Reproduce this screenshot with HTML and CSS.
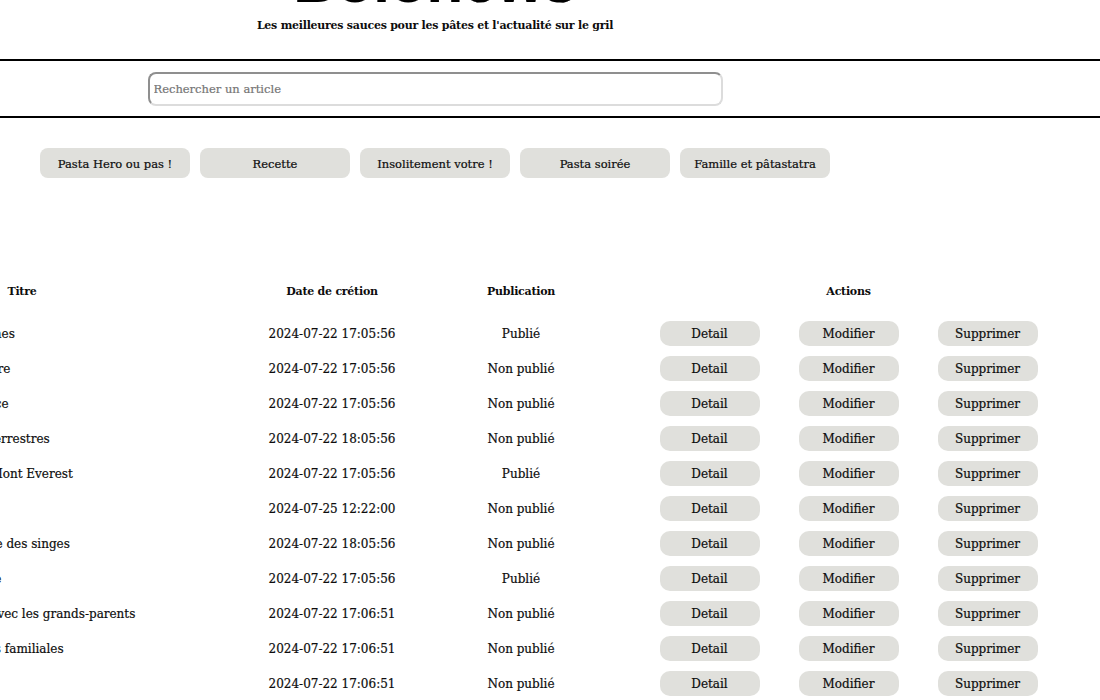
FILE: index.html
```html
<!DOCTYPE html>
<html lang="fr">
<head>
<meta charset="utf-8">
<title>Bolonews – Administration</title>
<link rel="stylesheet" href="styles.css">
</head>
<body>
<header class="masthead">
  <h1 class="brand">Bolonews</h1>
  <p class="tagline">Les meilleures sauces pour les pâtes et l'actualité sur le gril</p>
</header>
<div class="searchbar">
  <div class="search-inner">
    <input class="search" type="text" placeholder="Rechercher un article">
  </div>
</div>
<nav class="cats">
  <a class="cat">Pasta Hero ou pas !</a>
  <a class="cat">Recette</a>
  <a class="cat">Insolitement votre !</a>
  <a class="cat">Pasta soirée</a>
  <a class="cat">Famille et pâtastatra</a>
</nav>
<section class="table">
  <div class="row head">
    <div class="c-title">Titre</div>
    <div class="c-date">Date de crétion</div>
    <div class="c-pub">Publication</div>
    <div class="c-act">Actions</div>
  </div>
  <div class="row">
    <div class="c-title">Les 10 meilleures pâtes italiennes</div>
    <div class="c-date">2024-07-22 17:05:56</div>
    <div class="c-pub">Publié</div>
    <div class="c-act"><a class="btn">Detail</a><a class="btn">Modifier</a><a class="btn">Supprimer</a></div>
  </div>
  <div class="row">
    <div class="c-title">Pennes carbonara de grand-mère</div>
    <div class="c-date">2024-07-22 17:05:56</div>
    <div class="c-pub">Non publié</div>
    <div class="c-act"><a class="btn">Detail</a><a class="btn">Modifier</a><a class="btn">Supprimer</a></div>
  </div>
  <div class="row">
    <div class="c-title">Des lasagnes et leur petite sauce</div>
    <div class="c-date">2024-07-22 17:05:56</div>
    <div class="c-pub">Non publié</div>
    <div class="c-act"><a class="btn">Detail</a><a class="btn">Modifier</a><a class="btn">Supprimer</a></div>
  </div>
  <div class="row">
    <div class="c-title">Des spaghettis pour des extraterrestres</div>
    <div class="c-date">2024-07-22 18:05:56</div>
    <div class="c-pub">Non publié</div>
    <div class="c-act"><a class="btn">Detail</a><a class="btn">Modifier</a><a class="btn">Supprimer</a></div>
  </div>
  <div class="row">
    <div class="c-title">Des spaghettis au sommet du Mont Everest</div>
    <div class="c-date">2024-07-22 17:05:56</div>
    <div class="c-pub">Publié</div>
    <div class="c-act"><a class="btn">Detail</a><a class="btn">Modifier</a><a class="btn">Supprimer</a></div>
  </div>
  <div class="row">
    <div class="c-title">Pesto maison</div>
    <div class="c-date">2024-07-25 12:22:00</div>
    <div class="c-pub">Non publié</div>
    <div class="c-act"><a class="btn">Detail</a><a class="btn">Modifier</a><a class="btn">Supprimer</a></div>
  </div>
  <div class="row">
    <div class="c-title">Des pappardelle pour la planète des singes</div>
    <div class="c-date">2024-07-22 18:05:56</div>
    <div class="c-pub">Non publié</div>
    <div class="c-act"><a class="btn">Detail</a><a class="btn">Modifier</a><a class="btn">Supprimer</a></div>
  </div>
  <div class="row">
    <div class="c-title">Les raviolis à la mode sicilienne</div>
    <div class="c-date">2024-07-22 17:05:56</div>
    <div class="c-pub">Publié</div>
    <div class="c-act"><a class="btn">Detail</a><a class="btn">Modifier</a><a class="btn">Supprimer</a></div>
  </div>
  <div class="row">
    <div class="c-title">Un joyeux dimanche de pâtes avec les grands-parents</div>
    <div class="c-date">2024-07-22 17:06:51</div>
    <div class="c-pub">Non publié</div>
    <div class="c-act"><a class="btn">Detail</a><a class="btn">Modifier</a><a class="btn">Supprimer</a></div>
  </div>
  <div class="row">
    <div class="c-title">Les vieilles traditions culinaires familiales</div>
    <div class="c-date">2024-07-22 17:06:51</div>
    <div class="c-pub">Non publié</div>
    <div class="c-act"><a class="btn">Detail</a><a class="btn">Modifier</a><a class="btn">Supprimer</a></div>
  </div>
  <div class="row">
    <div class="c-title">Gnocchi</div>
    <div class="c-date">2024-07-22 17:06:51</div>
    <div class="c-pub">Non publié</div>
    <div class="c-act"><a class="btn">Detail</a><a class="btn">Modifier</a><a class="btn">Supprimer</a></div>
  </div>
</section>
</body>
</html>
```
FILE: styles.css
```css
html, body {
  margin: 0;
  padding: 0;
  overflow: hidden;
  background: #fff;
}
body {
  font-family: "DejaVu Serif", "Liberation Serif", serif;
  font-size: 12px;
  color: #0d0d0d;
  -webkit-text-stroke: 0.2px currentColor;
}

.masthead {
  width: 870px;
  text-align: center;
}
.brand {
  font-family: "Liberation Sans", Arial, sans-serif;
  font-weight: 700;
  font-size: 60px;
  line-height: 60px;
  margin: -48px 0 0;
  color: #000;
}
.tagline {
  font-weight: 700;
  font-size: 11px;
  line-height: 16px;
  letter-spacing: -0.25px;
  margin: 6px 0 25px;
  -webkit-text-stroke: 0;
}

.searchbar {
  border-top: 2px solid #000;
  border-bottom: 2px solid #000;
  padding: 11px 0 10px;
}
.search-inner {
  width: 870px;
  display: flex;
  justify-content: center;
}
.search {
  box-sizing: border-box;
  width: 575px;
  height: 34px;
  border-width: 2px;
  border-style: solid;
  border-color: #8f8f8f #dcdcdc #dcdcdc #8f8f8f;
  border-radius: 8px;
  padding: 0 4px;
  font-family: "DejaVu Serif", serif;
  font-size: 11.5px;
  color: #111;
  outline: none;
}
.search::placeholder {
  color: #757575;
}

.cats {
  display: flex;
  gap: 10px;
  padding-left: 40px;
  margin-top: 30px;
}
.cat {
  width: 150px;
  height: 30px;
  display: flex;
  align-items: center;
  justify-content: center;
  padding-top: 1px;
  box-sizing: border-box;
  background: #e0e0dc;
  border-radius: 8px;
  font-size: 11.5px;
}

.table {
  margin-top: 96px;
  margin-left: -199px;
  width: 1281px;
}
.row {
  display: grid;
  grid-template-columns: 436px 190px 188px 467px;
  height: 35px;
  align-items: center;
}
.row.head {
  font-weight: 700;
  font-size: 11px;
  letter-spacing: -0.25px;
  margin-bottom: 7px;
  -webkit-text-stroke: 0;
}
.row.head > div {
  text-align: center;
}
.c-title {
  padding-left: 6px;
  white-space: nowrap;
}
.c-date,
.c-pub {
  text-align: center;
}
.c-act {
  display: flex;
  justify-content: center;
  gap: 39px;
}
.btn {
  width: 100px;
  height: 25px;
  display: flex;
  align-items: center;
  justify-content: center;
  background: #e0e0dc;
  border-radius: 10px;
}
```
